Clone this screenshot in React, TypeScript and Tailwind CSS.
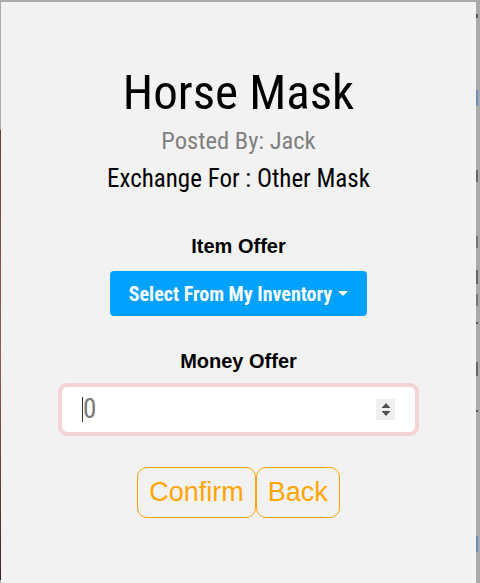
import { useState } from 'react';

const narrow = "font-['Liberation_Sans_Narrow','Roboto_Condensed','DejaVu_Sans_Condensed',sans-serif]";

const SpinBox = () => (
  <div className="w-[19px] h-[21px] bg-[#efefef] flex items-center justify-center">
    <svg width="10" height="15" viewBox="0 0 10 15">
      <path d="M5 1 L9.5 6 L0.5 6 Z" fill="#505050" />
      <path d="M0.5 9 L9.5 9 L5 14 Z" fill="#505050" />
    </svg>
  </div>
);

// bits of the page that peek out from behind the dialog
const Peek = ({ top, h, color }: { top: string; h: string; color: string }) => (
  <div className={`${top} ${h} ${color} w-[2px]`} />
);

const App = () => {
  const [money] = useState('0');

  return (
    <div className="w-[480px] h-[583px] overflow-hidden bg-[#aaaaaa] flex pt-[2px]">
      <div className="w-px flex flex-col">
        <div className="h-[128px]" />
        <div className="h-[450px] bg-gradient-to-b from-[#6a4034] via-[#9a5c4e] to-[#3a2724]" />
      </div>

      <div className="w-[475px] bg-[#f2f2f2] flex flex-col items-center pt-[61px]">
        <h1 className={`${narrow} text-[49px] leading-[60px] text-black`}>Horse Mask</h1>
        <p className={`${narrow} mt-[2px] text-[24.5px] leading-[31px] text-[#808080]`}>Posted By: Jack</p>
        <p className={`${narrow} mt-[7px] text-[25px] leading-[31px] text-black`}>Exchange For : Other Mask</p>

        <h3 className="mt-[40px] font-['Liberation_Sans',Arial,sans-serif] font-bold text-[20px] leading-[24px] text-black">Item Offer</h3>
        <button className={`${narrow} mt-[13px] h-[45px] w-[257px] rounded-[4px] bg-[#00a1ff] text-white font-bold text-[20px] flex items-center justify-center gap-[6px]`}>
          Select From My Inventory
          <span className="border-t-[5px] border-t-white border-x-[5px] border-x-transparent" />
        </button>

        <h3 className="mt-[33px] font-['Liberation_Sans',Arial,sans-serif] font-bold text-[20px] leading-[24px] text-black">Money Offer</h3>
        <div className="mt-[10px] w-[361px] h-[53px] rounded-[9px] bg-[#f3d3d4] p-[4px]">
          <div className="h-full rounded-[5px] bg-white flex items-center pl-[20px] pr-[20px]">
            <span className="w-px h-[25px] bg-[#333]" />
            <span className={`${narrow} text-[27px] leading-none text-[#7a7a7a] flex-1`}>{money}</span>
            <SpinBox />
          </div>
        </div>

        <div className="mt-[31px] flex font-['Liberation_Sans',Arial,sans-serif] text-[27px] leading-[31px] text-[#ffa500]">
          <button className="border border-[#ffa500] rounded-[10px] px-[11px] py-[9px]">Confirm</button>
          <button className="border border-[#ffa500] rounded-[10px] px-[11px] py-[9px]">Back</button>
        </div>
      </div>

      <div className="flex-1 overflow-hidden flex flex-col">
        <Peek top="mt-[12px]" h="h-[4px]" color="bg-[#555]" />
        <Peek top="mt-[72px]" h="h-[16px]" color="bg-[#6f8fc0]" />
        <Peek top="mt-[64px]" h="h-[12px]" color="bg-[#666]" />
        <Peek top="mt-[54px]" h="h-[12px]" color="bg-[#777]" />
        <Peek top="mt-[22px]" h="h-[14px]" color="bg-[#666]" />
        <Peek top="mt-[10px]" h="h-[12px]" color="bg-[#777]" />
        <Peek top="mt-[16px]" h="h-[2px]" color="bg-[#555]" />
        <Peek top="mt-[38px]" h="h-[14px]" color="bg-[#666]" />
        <Peek top="mt-[34px]" h="h-[2px]" color="bg-[#555]" />
        <Peek top="mt-[124px]" h="h-[16px]" color="bg-[#6f8fc0]" />
      </div>
    </div>
  );
};

export default App;
